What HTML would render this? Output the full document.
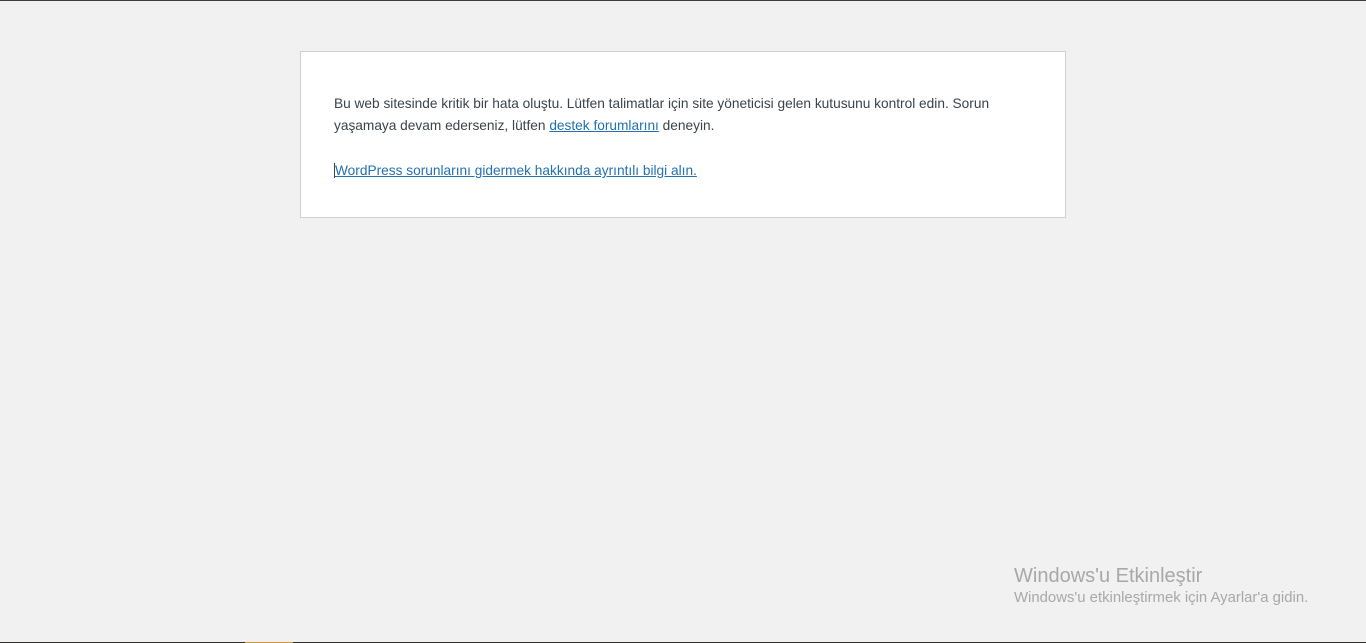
<!DOCTYPE html>
<html><head><meta charset="utf-8"><style>
html,body{margin:0;padding:0;width:1366px;height:643px;overflow:hidden;background:#f1f1f1;font-family:"Liberation Sans",sans-serif;}
.top{position:absolute;left:0;top:0;width:1366px;height:1px;background:#3c3c3c}
.bot{position:absolute;left:0;top:642px;width:1366px;height:1px;background:#2f2f28}
.bot2{position:absolute;left:245px;top:642px;width:48px;height:1px;background:#c8913a}
.box{position:absolute;left:300px;top:51px;width:764px;height:165px;background:#fff;border:1px solid #ccd0d4;box-sizing:content-box}
p{position:absolute;left:33px;margin:0;font-size:13.7px;color:#3c434a;line-height:22px;width:680px}
a{color:#2271b1}
.wm1{position:absolute;left:1014px;top:565px;font-size:20px;color:#a8a8a8}
.wm2{position:absolute;left:1014px;top:590px;font-size:14.9px;color:#a8a8a8}
</style></head><body>
<div class="top"></div>
<div class="box">
<p style="top:41px">Bu web sitesinde kritik bir hata oluştu. Lütfen talimatlar için site yöneticisi gelen kutusunu kontrol edin. Sorun yaşamaya devam ederseniz, lütfen <a href="#">destek forumlarını</a> deneyin.</p>
<p style="top:108px"><a href="#" style="border-left:1px solid #3c434a">WordPress sorunlarını gidermek hakkında ayrıntılı bilgi alın.</a></p>
</div>
<div class="wm1">Windows'u Etkinleştir</div>
<div class="wm2">Windows'u etkinleştirmek için Ayarlar'a gidin.</div>
<div class="bot"></div><div class="bot2"></div>
</body></html>
